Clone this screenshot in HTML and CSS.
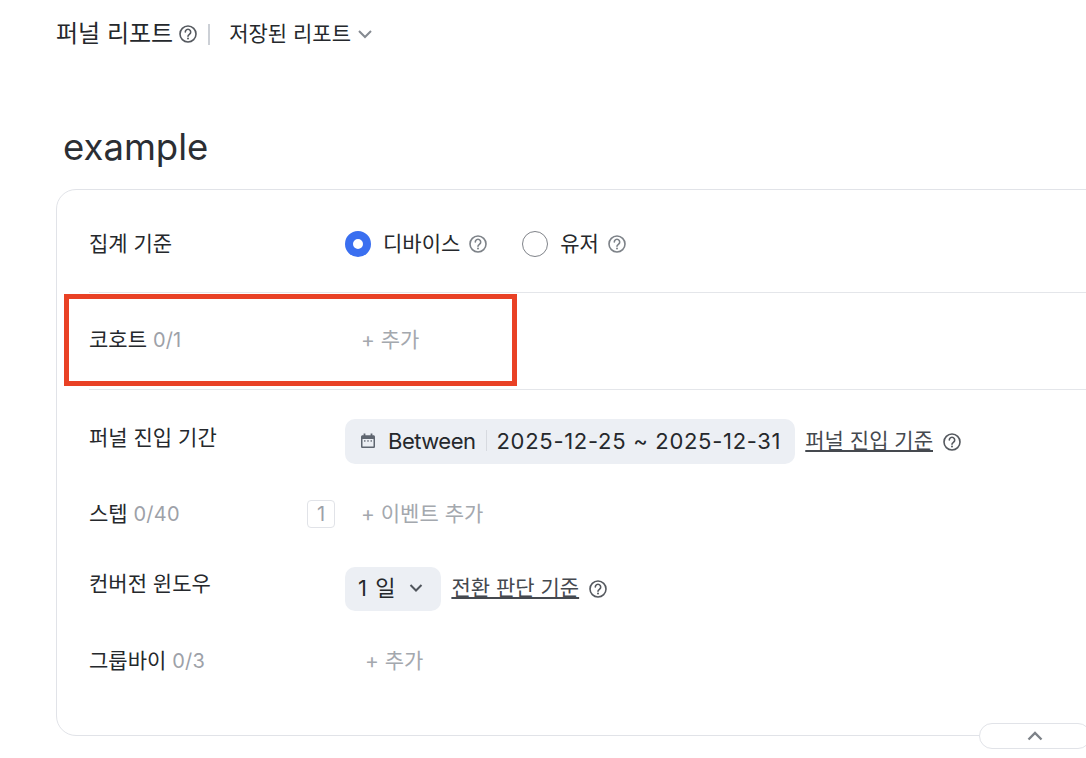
FILE: index.html
```html
<!DOCTYPE html>
<html lang="ko">
<head>
    <meta charset="UTF-8">
    <title>퍼널 리포트</title>
    <link rel="stylesheet" href="styles.css">
</head>
<body>
    <svg class="svg-defs" width="0" height="0">
        <symbol id="help" viewBox="0 0 18 18">
            <circle cx="9" cy="9" r="8" fill="none" stroke="currentColor" stroke-width="1.600"/>
            <path d="M6.300 7a2.700 2.700 0 1 1 4.100 2.300c-.9.6-1.400 1-1.400 1.900" fill="none" stroke="currentColor" stroke-width="1.600" stroke-linecap="round"/>
            <circle cx="9" cy="13.600" r="1" fill="currentColor"/>
        </symbol>
    </svg>

    <header class="top-bar">
        <span class="top-title">퍼널 리포트</span>
        <svg class="help help-dark"><use href="#help"/></svg>
        <span class="top-divider"></span>
        <span class="top-saved">저장된 리포트</span>
        <svg class="top-chevron" viewBox="0 0 14 14"><path d="M1 4l6 6 6-6" fill="none" stroke="currentColor" stroke-width="2"/></svg>
    </header>

    <h1 class="report-name">example</h1>

    <section class="card">
        <div class="row row-basis">
            <div class="label">집계 기준</div>
            <div class="radio-group">
                <span class="radio radio-on"></span>
                <span class="radio-text">디바이스</span>
                <svg class="help help-grey"><use href="#help"/></svg>
                <span class="radio radio-off"></span>
                <span class="radio-text">유저</span>
                <svg class="help help-grey"><use href="#help"/></svg>
            </div>
        </div>

        <div class="row row-cohort">
            <div class="label">코호트 <span class="count">0/1</span></div>
            <div class="add add-cohort">+ 추가</div>
        </div>

        <div class="settings">
            <div class="row row-period">
                <div class="label label-raised">퍼널 진입 기간</div>
                <div class="pill pill-date">
                    <svg class="calendar" viewBox="0 0 16 16">
                        <path d="M1 3.800c0-.9.700-1.600 1.600-1.600h10.800c.9 0 1.600.7 1.600 1.600v9.600c0 .9-.7 1.600-1.600 1.600H2.600c-.9 0-1.600-.7-1.600-1.600z" fill="#5f6670"/>
                        <rect x="3.600" y="0.500" width="1.800" height="3" fill="#5f6670"/>
                        <rect x="10.600" y="0.500" width="1.800" height="3" fill="#5f6670"/>
                        <rect x="2.500" y="6" width="11" height="7.500" fill="#eceff4"/>
                        <rect x="4" y="7.300" width="1.500" height="1.300" fill="#5f6670"/>
                        <rect x="7.250" y="7.300" width="1.500" height="1.300" fill="#5f6670"/>
                        <rect x="10.500" y="7.300" width="1.500" height="1.300" fill="#5f6670"/>
                    </svg>
                    <span class="pill-op">Between</span>
                    <span class="pill-divider"></span>
                    <span class="pill-range">2025-12-25 ~ 2025-12-31</span>
                </div>
                <a class="link">퍼널 진입 기준</a>
                <svg class="help help-dark"><use href="#help"/></svg>
            </div>

            <div class="row row-step">
                <div class="label label-step">
                    <span>스텝 <span class="count">0/40</span></span>
                    <span class="step-num">1</span>
                </div>
                <div class="add add-event">+ 이벤트 추가</div>
            </div>

            <div class="row row-window">
                <div class="label label-raised">컨버전 윈도우</div>
                <div class="pill pill-window">
                    <span class="pill-days">1 일</span>
                    <svg class="pill-chevron" viewBox="0 0 14 14"><path d="M1.500 4L7 9.500 12.500 4" fill="none" stroke="currentColor" stroke-width="2"/></svg>
                </div>
                <a class="link">전환 판단 기준</a>
                <svg class="help help-dark"><use href="#help"/></svg>
            </div>

            <div class="row row-group">
                <div class="label">그룹바이 <span class="count">0/3</span></div>
                <div class="add add-group">+ 추가</div>
            </div>
        </div>

        <button class="collapse">
            <svg viewBox="0 0 16 10"><path d="M1.500 8.500L8 2l6.500 6.500" fill="none" stroke="currentColor" stroke-width="2.400"/></svg>
        </button>
    </section>

    <div class="highlight"></div>
</body>
</html>
```

FILE: styles.css
```css
html, body {
    margin: 0;
    height: 758px;
    overflow: hidden;
}

body {
    position: relative;
    background-color: #fff;
    color: #25282c;
    font-family: Inter, "Noto Sans CJK KR", sans-serif;
    font-size: 21px;
    line-height: 28px;
}

.svg-defs {
    position: absolute;
}

.top-bar {
    display: flex;
    align-items: center;
    height: 28px;
    padding: 20px 0 0 56px;
}

.top-title {
    font-size: 24px;
}

.help {
    width: 18px;
    height: 18px;
    flex: none;
}

.help-dark {
    color: #55595f;
}

.help-grey {
    color: #7d8288;
}

.top-bar .help {
    margin-left: 6px;
}

.top-divider {
    width: 2px;
    height: 21px;
    margin: 0 19px 0 11px;
    background-color: #ccd0d6;
}

.top-saved {
    font-size: 21px;
}

.top-chevron {
    width: 14px;
    height: 14px;
    margin-left: 7px;
    color: #858a91;
}

.report-name {
    margin: 77px 0 0 63px;
    font-size: 36.500px;
    line-height: 44px;
    font-weight: 400;
    color: #2b2e33;
}

.card {
    position: relative;
    width: 1100px;
    height: 547px;
    margin: 20px 0 0 56px;
    box-sizing: border-box;
    padding: 0 0 0 32px;
    border: 1px solid #e1e3e8;
    border-radius: 20px;
}

.row {
    display: flex;
    align-items: center;
}

.label {
    flex: none;
    width: 256px;
}

.label-raised {
    margin-bottom: 7px;
}

.row-window .label-raised {
    margin-bottom: 11px;
}

.count {
    font-size: 20px;
    letter-spacing: 0.2px;
    color: #9da1a8;
}

.row-basis {
    height: 103px;
    padding-top: 6px;
    border-bottom: 1px solid #e4e6ea;
    box-sizing: border-box;
}

.row-cohort {
    height: 97px;
    padding-bottom: 2px;
    border-bottom: 1px solid #e4e6ea;
    box-sizing: border-box;
}

.radio-group {
    display: flex;
    align-items: center;
}

.radio {
    width: 26px;
    height: 26px;
    box-sizing: border-box;
    border-radius: 50%;
}

.radio-on {
    border: 8px solid #3a6ff0;
    background-color: #fff;
}

.radio-off {
    margin-left: 35px;
    border: 1px solid #7f8389;
}

.radio-text {
    margin: 0 9px 0 12px;
}

.add {
    color: #a4a8ae;
}

.add-cohort,
.add-event {
    margin-left: 16px;
}

.add-group {
    margin-left: 20px;
}

.settings {
    padding-top: 29px;
}

.pill {
    display: flex;
    align-items: center;
    box-sizing: border-box;
    background-color: #eceff4;
    border-radius: 10px;
    font-size: 22px;
    padding-bottom: 2px;
}

.pill-date {
    height: 45px;
    padding-left: 15px;
    padding-right: 14px;
}

.calendar {
    width: 16px;
    height: 16px;
    margin-right: 12px;
}

.pill-op {
    letter-spacing: -0.5px;
}

.pill-range {
    letter-spacing: 0.7px;
}

.pill-divider {
    width: 1px;
    height: 21px;
    margin: 0 10px;
    background-color: #d7dae0;
}

.pill-window {
    height: 44px;
    padding-left: 13px;
    padding-right: 18px;
}

.pill-days {
    letter-spacing: 1px;
}

.pill-chevron {
    width: 14px;
    height: 14px;
    margin-left: 13px;
    color: #50555c;
}

.link {
    margin: 0 10px 2px;
    color: #45494f;
    text-decoration: underline;
}

.row-period {
    height: 45px;
}

.row-step {
    height: 30px;
    margin-top: 35px;
}

.row-window {
    height: 44px;
    margin-top: 38px;
}

.row-group {
    height: 30px;
    margin-top: 35px;
}

.label-step {
    display: flex;
    justify-content: space-between;
    align-items: center;
    box-sizing: border-box;
    padding-right: 10px;
}

.step-num {
    width: 28px;
    height: 28px;
    box-sizing: border-box;
    border: 1px solid #e1e3e8;
    border-radius: 4px;
    text-align: center;
    font-size: 20px;
    line-height: 26px;
    color: #9da1a8;
}

.collapse {
    position: absolute;
    top: 533px;
    left: 922px;
    width: 112px;
    height: 26px;
    padding: 0;
    background-color: #fff;
    border: 1px solid #e1e3e8;
    border-radius: 13px;
}

.collapse svg {
    display: block;
    width: 16px;
    height: 10px;
    margin: 0 auto;
    color: #7d8288;
}

.highlight {
    position: absolute;
    top: 294px;
    left: 64px;
    width: 453px;
    height: 92px;
    box-sizing: border-box;
    border: 5px solid #e94125;
}
```
